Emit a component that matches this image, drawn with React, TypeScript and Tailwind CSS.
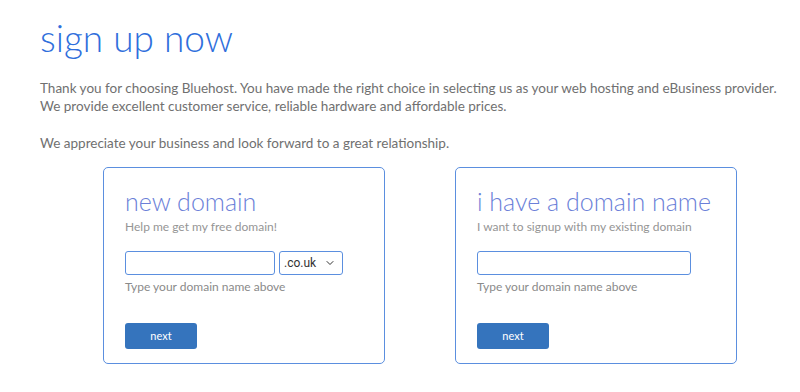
import { ChevronDown } from 'lucide-react';

const font = { fontFamily: 'Lato, "Open Sans", sans-serif' };

function DomainCard({
  title,
  subtitle,
  withSelect,
}: {
  title: string;
  subtitle: string;
  withSelect?: boolean;
}) {
  return (
    <div className="w-[282px] h-[197px] border border-[#5b8fdf] rounded-[5px] bg-white pl-[21px] pt-[18px]">
      <h2 className="text-[25px] leading-[30px] font-light text-[#6b7fd8]">{title}</h2>
      <p className="mt-[3px] text-[12px] leading-[16px] text-[#959595]">{subtitle}</p>
      <div className="mt-[16px] flex gap-[4px]">
        <input
          className={`h-[24px] border border-[#5b8fdf] rounded-[3px] outline-none px-1 ${
            withSelect ? 'w-[150px]' : 'w-[214px]'
          }`}
        />
        {withSelect && (
          <div className="w-[64px] h-[24px] border border-[#5b8fdf] rounded-[3px] flex items-center justify-between pl-[4px] pr-[6px]">
            <span
              className="text-[12px] text-[#333]"
              style={{ fontFamily: 'Roboto, "Liberation Sans", sans-serif' }}
            >
              .co.uk
            </span>
            <ChevronDown size={12} strokeWidth={2} className="text-[#333]" />
          </div>
        )}
      </div>
      <p className="mt-[4px] text-[12px] leading-[16px] text-[#8a8a8a]">Type your domain name above</p>
      <button className="mt-[28px] w-[72px] h-[26px] rounded-[3px] bg-[#3574bd] text-white text-[11px]">
        next
      </button>
    </div>
  );
}

export default function App() {
  return (
    <div className="w-[800px] h-[392px] bg-white overflow-hidden" style={font}>
      <div className="pl-[40px] pt-[15px]">
        <h1 className="text-[37px] leading-[46px] font-light text-[#2f6fdc]">sign up now</h1>
        <div className="mt-[18px] text-[13.5px] leading-[18px] text-[#707070] whitespace-nowrap">
          <p>
            Thank you for choosing Bluehost. You have made the right choice in selecting us as your web hosting and
            eBusiness provider.
          </p>
          <p>We provide excellent customer service, reliable hardware and affordable prices.</p>
          <p className="mt-[19px]">We appreciate your business and look forward to a great relationship.</p>
        </div>
      </div>
      <div className="mt-[15px] pl-[103px] flex gap-[70px]">
        <DomainCard title="new domain" subtitle="Help me get my free domain!" withSelect />
        <DomainCard title="i have a domain name" subtitle="I want to signup with my existing domain" />
      </div>
    </div>
  );
}
